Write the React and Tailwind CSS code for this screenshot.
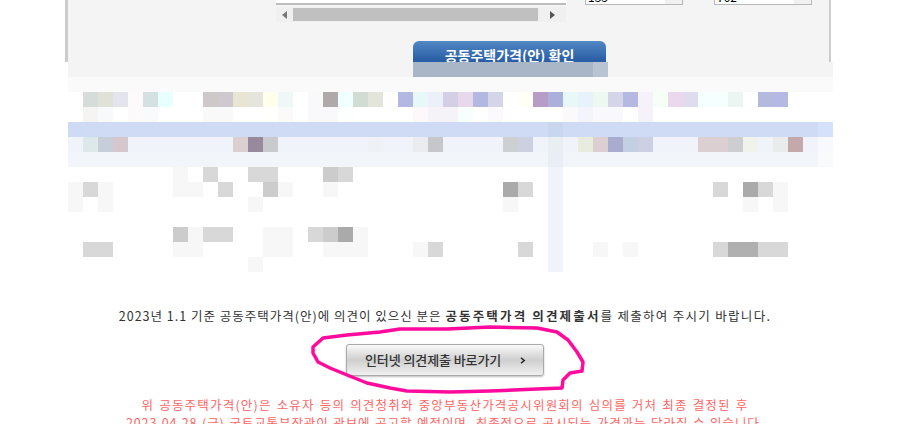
const W = "#ffffff";

// one mosaic row: base colour plus a few cells that differ
function row(base, cells = {}) {
  return Array.from({ length: 51 }, (_, i) => cells[i] || base);
}

const g1 = "#f7f7f7";
const g2 = "#d8d8d8";
const g3 = "#cccccc";
const g4 = "#aaaaaa";
const tint = "#f0f4f8";

const ghost = {};
for (let i = 23; i < 35; i++) ghost[i] = "#a8b6c8";
ghost[35] = "#b8c4d2";

const MOSAIC = [
  row("#f4f4f4", ghost),
  row("#fafafa"),
  row(W, {
    1: "#d5dcd9", 2: "#e0e2da", 3: "#e3e4ec", 4: "#fdfafb", 5: "#d5e0e3", 6: "#e8ffff",
    9: "#cfc8c8", 10: "#cfc8cf", 11: "#e8e6d2", 12: "#e5e5dd", 13: "#ffffee", 14: "#f0f8f7",
    16: "#f9f9fb", 17: "#b0a9aa", 18: "#f0ffff", 19: "#d2dcd2", 20: "#e3e4da", 22: "#b3b8e3",
    23: "#e8f8f8", 24: "#ecf0f8", 25: "#d5cfe5", 26: "#e8d8ec", 27: "#b3b8e0", 28: "#d5d5ea",
    30: "#fffff5", 31: "#b89cc8", 32: "#abb0da", 33: "#e8f8f8", 34: "#e8f2fa", 35: "#eef8f2",
    36: "#d5d5ea", 37: "#b5b8e0", 38: "#f5f2fa", 39: "#f5fff5", 40: "#ead8ec", 41: "#e0dcf0",
    42: "#f5ffff", 43: "#f5ffff", 44: "#ecf5f2", 46: "#b3bade", 47: "#b5b8e3",
  }),
  row(W, {
    1: "#f5f4f2", 2: "#f8f9fb", 4: "#fcfafb", 5: "#f8fafb", 9: "#f9f9f9", 10: "#f9f9f9",
    13: "#fffffb", 14: "#fcf9fb", 16: "#f9f9fb", 17: "#f9f9fb", 18: "#fdffff", 23: "#fcf8fb",
    24: "#f5f2f8", 25: "#f5f2f8", 26: "#f8fdfd", 28: "#fbf9fd", 33: "#fcf9fb", 34: "#f4f4fc",
    35: "#f9f9fd", 36: "#f9f9fd", 38: "#f5f2fa",
  }),
  row("#cfdbf5", { 32: "#c8d6ee", 50: "#d5e0fa" }),
  row("#f0f4fa", {
    1: "#dce8ea", 2: "#c8ced9", 3: "#d4c8cc", 11: "#dccfd2", 12: "#988a9c", 13: "#c8cace",
    20: "#eef1f6", 23: "#eaecf0", 24: "#c5c7ca", 29: "#ccd0d0", 30: "#ccd0e0", 32: "#e8eef2",
    34: "#e8ecdf", 35: "#dccfd2", 36: "#a9abcf", 37: "#c3cfe2", 38: "#cdd0e2", 42: "#dccfd2",
    43: "#dccfd2", 44: "#ccced2", 45: "#eff3ec", 47: "#e8ecea", 48: "#c4a8aa", 50: "#f8f9fc",
  }),
  row("#f2f6fa", { 32: "#e8eef3", 50: "#f8fafc" }),
  row(W, { 7: g1, 9: g2, 12: g2, 13: g2, 17: g3, 18: g2, 32: tint }),
  row(W, {
    0: g1, 1: g2, 2: g1, 7: g1, 8: g1, 10: g2, 13: g3, 14: g1, 17: g1, 29: g4, 30: g2,
    32: tint, 43: g2, 45: g4, 46: g2, 47: g1,
  }),
  row(W, { 0: g1, 2: g1, 12: g1, 29: g1, 32: tint, 45: g1, 47: g1 }),
  row(W, { 32: tint }),
  row(W, { 7: g3, 8: g1, 9: g2, 10: g2, 13: g1, 14: g1, 16: g2, 17: g3, 18: g4, 19: g1, 32: tint }),
  row(W, {
    1: g2, 2: g2, 7: g1, 8: g1, 13: g1, 14: g1, 17: g1, 18: g1, 19: g1, 23: g1, 24: g2,
    30: g2, 32: tint, 35: g1, 37: g1, 43: g2, 44: "#b0b0b0", 45: "#b0b0b0", 46: g2, 47: g2,
  }),
  row(W, { 12: g1, 32: tint }),
];

function CutSelect({ value }) {
  return (
    <div className="-mt-[15px] flex h-[20px] w-[98px] border border-[#b8b8b8] bg-white">
      <div className="flex-1 pl-[2px] pt-[4px] text-[12px] leading-[14px] text-black">{value}</div>
      <div className="w-[17px] bg-[#f0f0f0]" />
    </div>
  );
}

export default function App() {
  return (
    <div className="relative h-[424px] overflow-hidden bg-white font-['Noto_Sans_CJK_KR',sans-serif]">

      {/* ── grey search panel, cut off at the top ── */}
      <div className="ml-[65px] h-[62px] w-[766px] overflow-hidden border-x-[2px] border-l-[3px] border-[#cccccc] bg-[#f4f4f4]">
        <div className="flex items-start">
          <div className="ml-[208px] w-[290px]">
            <div className="h-[5px] border-b-2 border-[#bdbdbd] bg-white" />
            <div className="mt-[2px] flex h-[15px] items-center bg-[#f0f0f0]">
              <div className="flex w-[17px] justify-center">
                <div className="h-0 w-0 border-y-[4px] border-r-[5px] border-y-transparent border-r-[#777777]" />
              </div>
              <div className="h-[13px] w-[245px] bg-[#c0c0c0]" />
              <div className="flex flex-1 justify-center">
                <div className="h-0 w-0 border-y-[4px] border-l-[5px] border-y-transparent border-l-[#555555]" />
              </div>
            </div>
          </div>
          <div className="ml-[19px]"><CutSelect value="133" /></div>
          <div className="ml-[31px]"><CutSelect value="702" /></div>
        </div>
        <div className="ml-[345px] mt-[19px] flex h-[28px] w-[193px] items-center justify-center rounded-t-[6px] bg-gradient-to-b from-[#5288c4] via-[#2a5ea5] via-70% to-[#2a5ea5] text-[14px] font-bold text-white">
          공동주택가격(안) 확인
        </div>
      </div>

      {/* ── blurred out table ── */}
      <div className="ml-[68px] w-[765px]">
        {MOSAIC.map((cells, r) => (
          <div key={r} className="flex">
            {cells.map((c, i) => (
              <div key={i} className="h-[15px] w-[15px]" style={{ background: c }} />
            ))}
          </div>
        ))}
      </div>

      {/* ── notice + button ── */}
      <div className="ml-[65px] flex w-[760px] flex-col items-center pt-[34px]">
        <p className="h-[20px] whitespace-nowrap text-[12.5px] leading-[20px] tracking-[1px] text-[#333333]">
          2023년 1.1 기준 공동주택가격(안)에 의견이 있으신 분은 <b className="tracking-[2.15px]">공동주택가격 의견제출서</b><span className="tracking-[1.3px]">를 제출하여 주시기 바랍니다.</span>
        </p>
        <button className="mt-[18px] flex h-[32px] w-[198px] items-center rounded-[3px] border border-[#aaaaaa] bg-gradient-to-b from-[#fafafa] via-[#cfcfcf] to-[#f0f0f0] pl-[18px] text-[13px] font-medium tracking-[-0.1px] text-[#333333] shadow-[0_1px_2px_rgba(0,0,0,0.25)]">
          인터넷 의견제출 바로가기
          <svg className="ml-[19px]" width="6" height="7" viewBox="0 0 6 7" fill="none" stroke="#222222" strokeWidth="1.5">
            <path d="M1 .8 4.2 3.5 1 6.2" />
          </svg>
        </button>
        <p className="mt-[20px] whitespace-nowrap text-[12.5px] leading-[18px] tracking-[1.2px] text-[#ff6666] [word-spacing:1px]">
          위 공동주택가격(안)은 소유자 등의 의견청취와 중앙부동산가격공시위원회의 심의를 거처 최종 결정된 후
        </p>
        <p className="whitespace-nowrap text-[12.5px] leading-[18px] tracking-[0.9px] text-[#ff6666] [word-spacing:1px]">
          2023.04.28 (금) 국토교통부장관이 관보에 공고할 예정이며, 최종적으로 공시되는 가격과는 달라질 수 있습니다.
        </p>
      </div>

      {/* ── hand drawn pink loop over the button ── */}
      <svg className="pointer-events-none absolute left-0 top-0" width="906" height="424" fill="none" stroke="#ff0a9c" strokeWidth="3.5" strokeLinejoin="round" strokeLinecap="round">
        <path d="M313 347 323 338 347 335 380 332 400 329 447 329 490 327 537 328 557 332 568 340 577 352 583 362 582 371 570 373 563 380 562 388 537 389 490 391 450 392 407 391 390 388 367 383 347 375 330 368 318 362 313 353Z" />
      </svg>
    </div>
  );
}
